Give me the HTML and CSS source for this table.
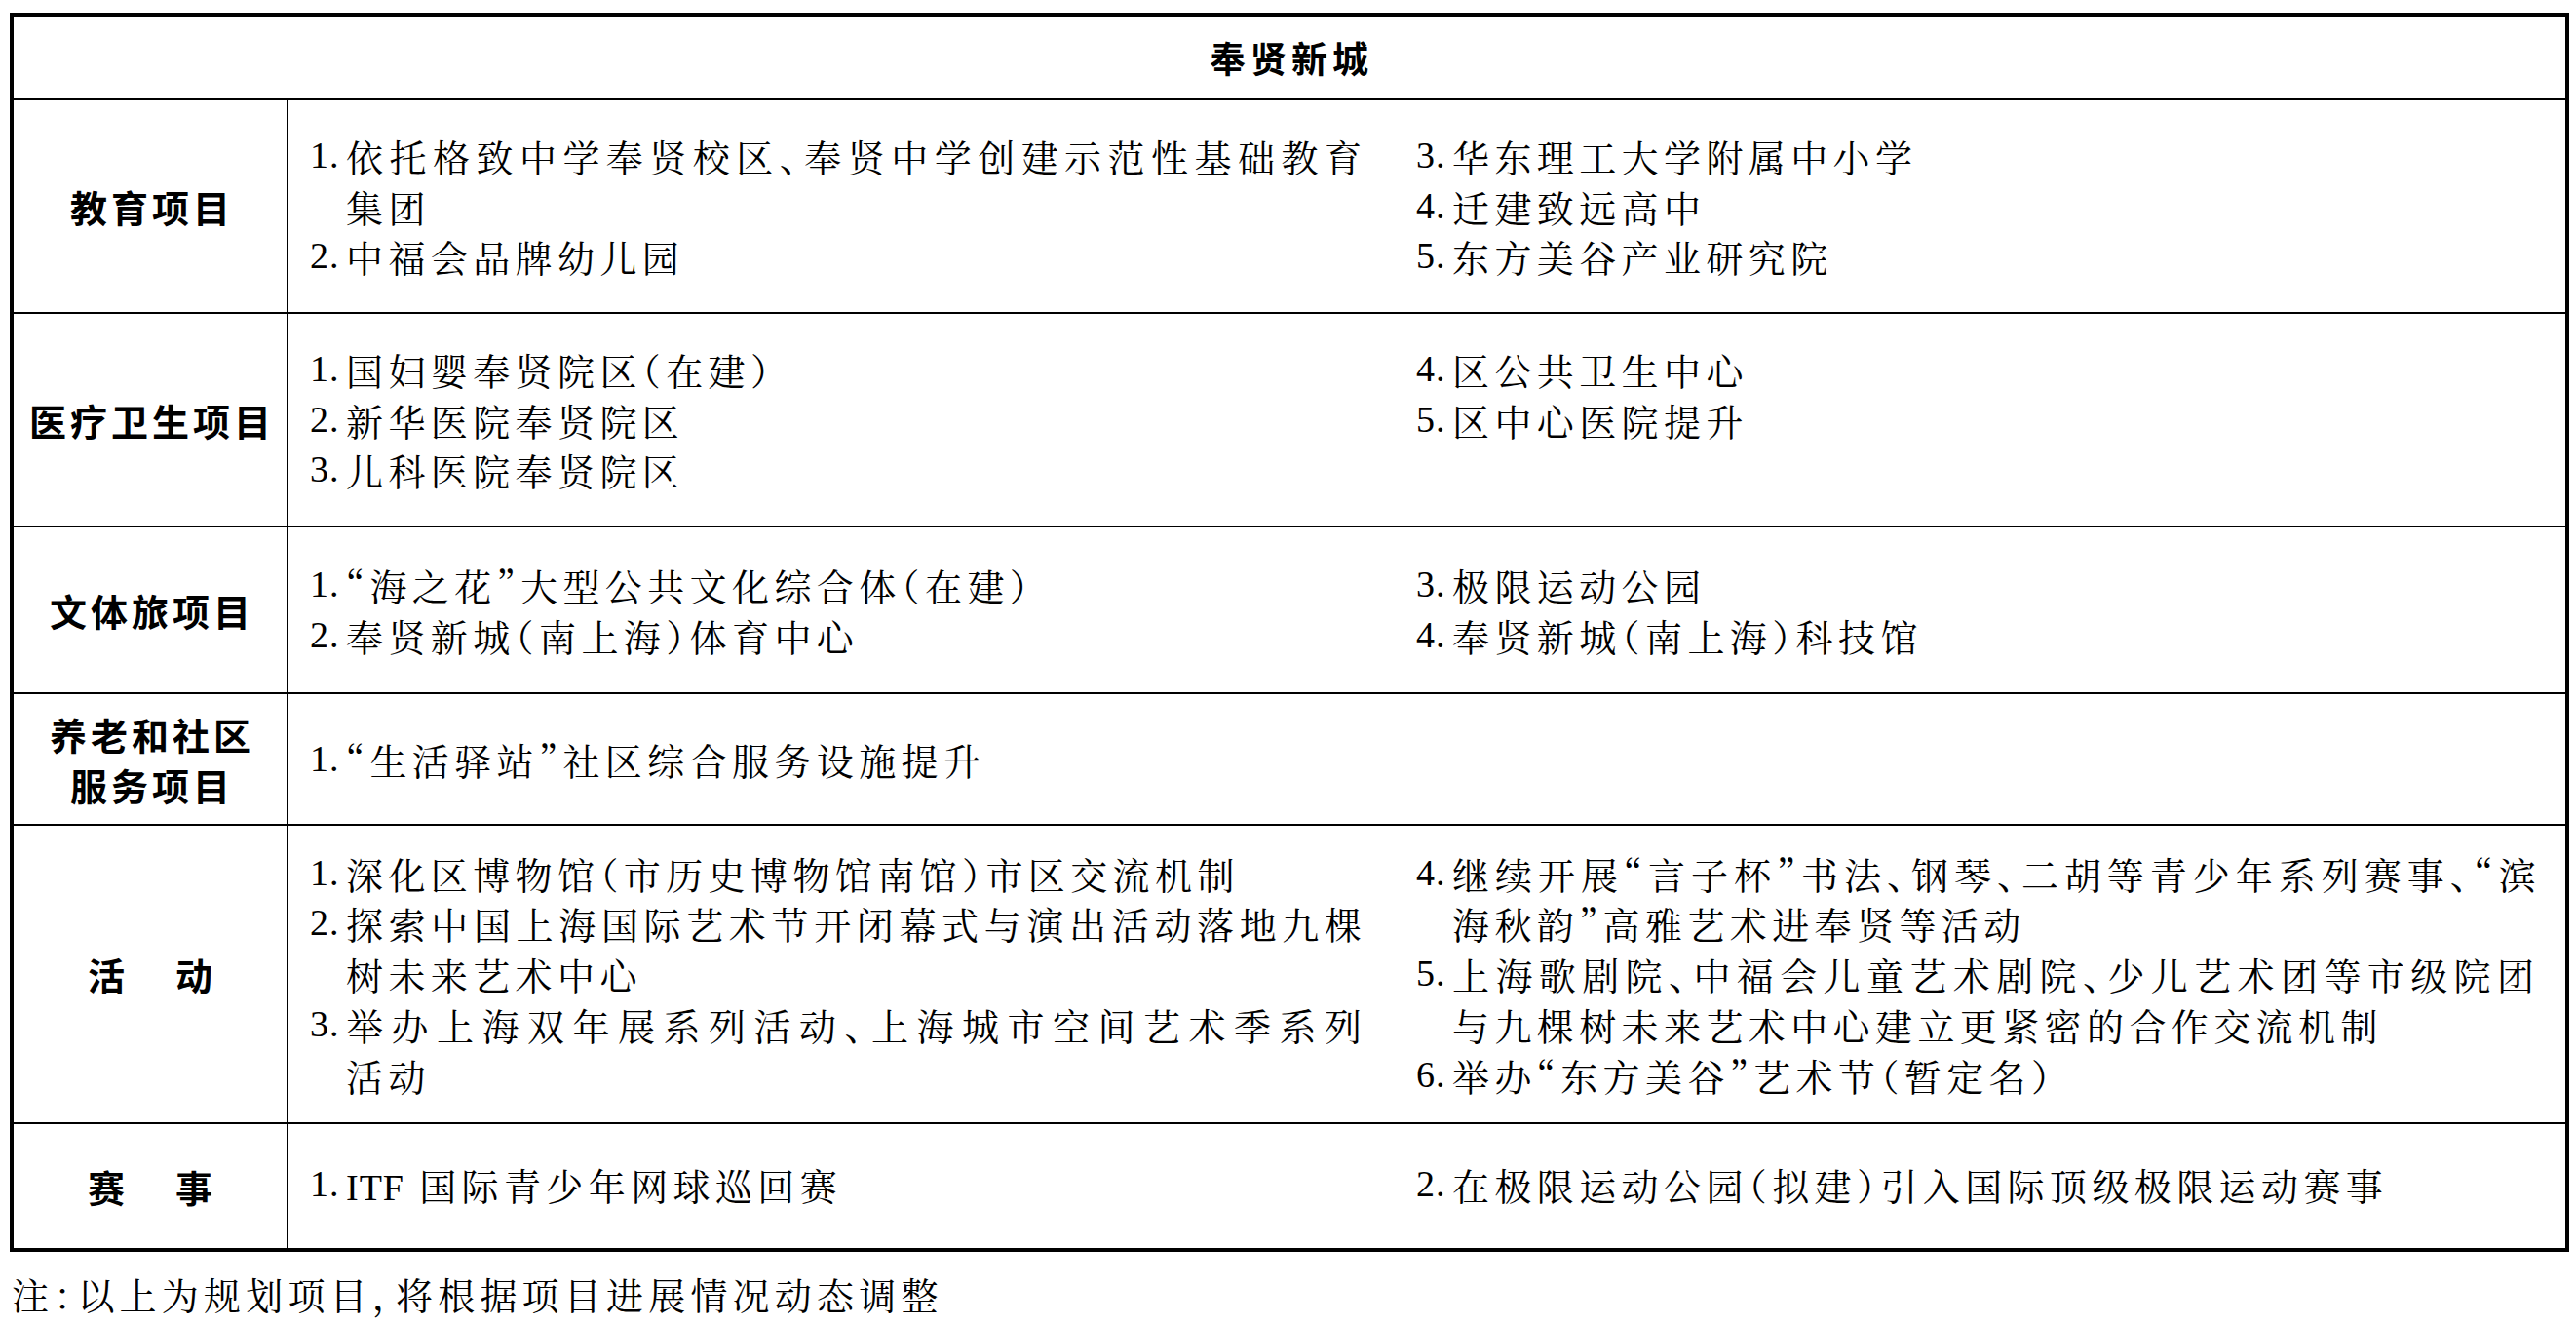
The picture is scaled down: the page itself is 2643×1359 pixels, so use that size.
FILE: index.html
```html
<!DOCTYPE html>
<html lang="zh-CN">
<head>
<meta charset="utf-8">
<title>奉贤新城</title>
<link rel="stylesheet" href="styles.css">
</head>
<body>
<div class="page">
  <div class="table">
    <div class="head">奉贤新城</div>

    <div class="label">教育项目</div>
    <div class="content">
      <div class="cols">
        <ul class="list">
          <li class="item"><span class="num">1.</span><span class="txt"><span class="ln just">依托格致中学奉贤校区、奉贤中学创建示范性基础教育</span><span class="ln">集团</span></span></li>
          <li class="item"><span class="num">2.</span><span class="txt">中福会品牌幼儿园</span></li>
        </ul>
        <ul class="list">
          <li class="item"><span class="num">3.</span><span class="txt">华东理工大学附属中小学</span></li>
          <li class="item"><span class="num">4.</span><span class="txt">迁建致远高中</span></li>
          <li class="item"><span class="num">5.</span><span class="txt">东方美谷产业研究院</span></li>
        </ul>
      </div>
    </div>

    <div class="label">医疗卫生项目</div>
    <div class="content">
      <div class="cols">
        <ul class="list">
          <li class="item"><span class="num">1.</span><span class="txt">国妇婴奉贤院区（在建）</span></li>
          <li class="item"><span class="num">2.</span><span class="txt">新华医院奉贤院区</span></li>
          <li class="item"><span class="num">3.</span><span class="txt">儿科医院奉贤院区</span></li>
        </ul>
        <ul class="list">
          <li class="item"><span class="num">4.</span><span class="txt">区公共卫生中心</span></li>
          <li class="item"><span class="num">5.</span><span class="txt">区中心医院提升</span></li>
        </ul>
      </div>
    </div>

    <div class="label">文体旅项目</div>
    <div class="content">
      <div class="cols">
        <ul class="list">
          <li class="item"><span class="num">1.</span><span class="txt">“海之花”大型公共文化综合体（在建）</span></li>
          <li class="item"><span class="num">2.</span><span class="txt">奉贤新城（南上海）体育中心</span></li>
        </ul>
        <ul class="list">
          <li class="item"><span class="num">3.</span><span class="txt">极限运动公园</span></li>
          <li class="item"><span class="num">4.</span><span class="txt">奉贤新城（南上海）科技馆</span></li>
        </ul>
      </div>
    </div>

    <div class="label">养老和社区<br>服务项目</div>
    <div class="content">
      <div class="cols">
        <ul class="list">
          <li class="item"><span class="num">1.</span><span class="txt">“生活驿站”社区综合服务设施提升</span></li>
        </ul>
        <ul class="list"></ul>
      </div>
    </div>

    <div class="label spaced">活动</div>
    <div class="content">
      <div class="cols">
        <ul class="list">
          <li class="item"><span class="num">1.</span><span class="txt">深化区博物馆（市历史博物馆南馆）市区交流机制</span></li>
          <li class="item"><span class="num">2.</span><span class="txt"><span class="ln just">探索中国上海国际艺术节开闭幕式与演出活动落地九棵</span><span class="ln">树未来艺术中心</span></span></li>
          <li class="item"><span class="num">3.</span><span class="txt"><span class="ln just">举办上海双年展系列活动、上海城市空间艺术季系列</span><span class="ln">活动</span></span></li>
        </ul>
        <ul class="list">
          <li class="item"><span class="num">4.</span><span class="txt"><span class="ln just tight">继续开展“言子杯”书法、钢琴、二胡等青少年系列赛事、“滨</span><span class="ln">海秋韵”高雅艺术进奉贤等活动</span></span></li>
          <li class="item"><span class="num">5.</span><span class="txt"><span class="ln just">上海歌剧院、中福会儿童艺术剧院、少儿艺术团等市级院团</span><span class="ln">与九棵树未来艺术中心建立更紧密的合作交流机制</span></span></li>
          <li class="item"><span class="num">6.</span><span class="txt">举办“东方美谷”艺术节（暂定名）</span></li>
        </ul>
      </div>
    </div>

    <div class="label spaced">赛事</div>
    <div class="content">
      <div class="cols">
        <ul class="list">
          <li class="item"><span class="num">1.</span><span class="txt"><span class="lat">ITF</span> 国际青少年网球巡回赛</span></li>
        </ul>
        <ul class="list">
          <li class="item"><span class="num">2.</span><span class="txt">在极限运动公园（拟建）引入国际顶级极限运动赛事</span></li>
        </ul>
      </div>
    </div>
  </div>

  <p class="note">注：以上为规划项目，将根据项目进展情况动态调整</p>
</div>
</body>
</html>
```

FILE: styles.css
```css
* {
  box-sizing: border-box;
}

body {
  margin: 0;
  background: #ffffff;
  color: #000000;
  font-family: "Noto Serif CJK SC", "Noto Sans CJK SC", serif;
}

.page {
  padding: 13px 0 0 10px;
}

.table {
  display: grid;
  width: 2626px;
  grid-template-columns: 282px 1fr;
  grid-template-rows: 84px 219px 219px 171px 135px 306px 129px;
  border: 4px solid #000;
}

.head {
  grid-column: 1 / -1;
  display: flex;
  align-items: center;
  justify-content: center;
  padding-left: 4px;
  font-family: "Noto Sans CJK SC", sans-serif;
  font-weight: 700;
  font-size: 37px;
  letter-spacing: 5px;
}

.label {
  display: flex;
  align-items: center;
  justify-content: center;
  text-align: center;
  border-top: 2px solid #000;
  border-right: 2px solid #000;
  padding-left: 4px;
  font-family: "Noto Sans CJK SC", sans-serif;
  font-weight: 700;
  font-size: 38px;
  line-height: 51.7px;
  letter-spacing: 4px;
}

.label.spaced {
  letter-spacing: 52px;
  padding-left: 52px;
}

.content {
  display: flex;
  align-items: center;
  border-top: 2px solid #000;
  padding: 0 29px 0 22px;
}

.cols {
  display: grid;
  width: 100%;
  grid-template-columns: 1082px 1150px;
  column-gap: 53px;
  align-items: start;
}

.list {
  margin: 0;
  padding: 0;
  list-style: none;
  font-size: 38px;
  line-height: 51.7px;
  letter-spacing: 5.4px;
  font-feature-settings: "halt";
}

.item {
  display: flex;
}

.num {
  flex: 0 0 37px;
  font-family: "Liberation Serif", serif;
  letter-spacing: 1px;
}

.txt {
  flex: 1 1 auto;
  min-width: 0;
}

.ln {
  display: block;
}

.just {
  text-align: justify;
  text-align-last: justify;
  letter-spacing: 3px;
}

.just.tight {
  letter-spacing: 1.2px;
}

.lat {
  font-family: "Liberation Serif", serif;
  letter-spacing: 1px;
}

.note {
  margin: 17px 0 0 2px;
  font-size: 38px;
  line-height: 52px;
  letter-spacing: 5.2px;
  font-feature-settings: "halt";
}
```
